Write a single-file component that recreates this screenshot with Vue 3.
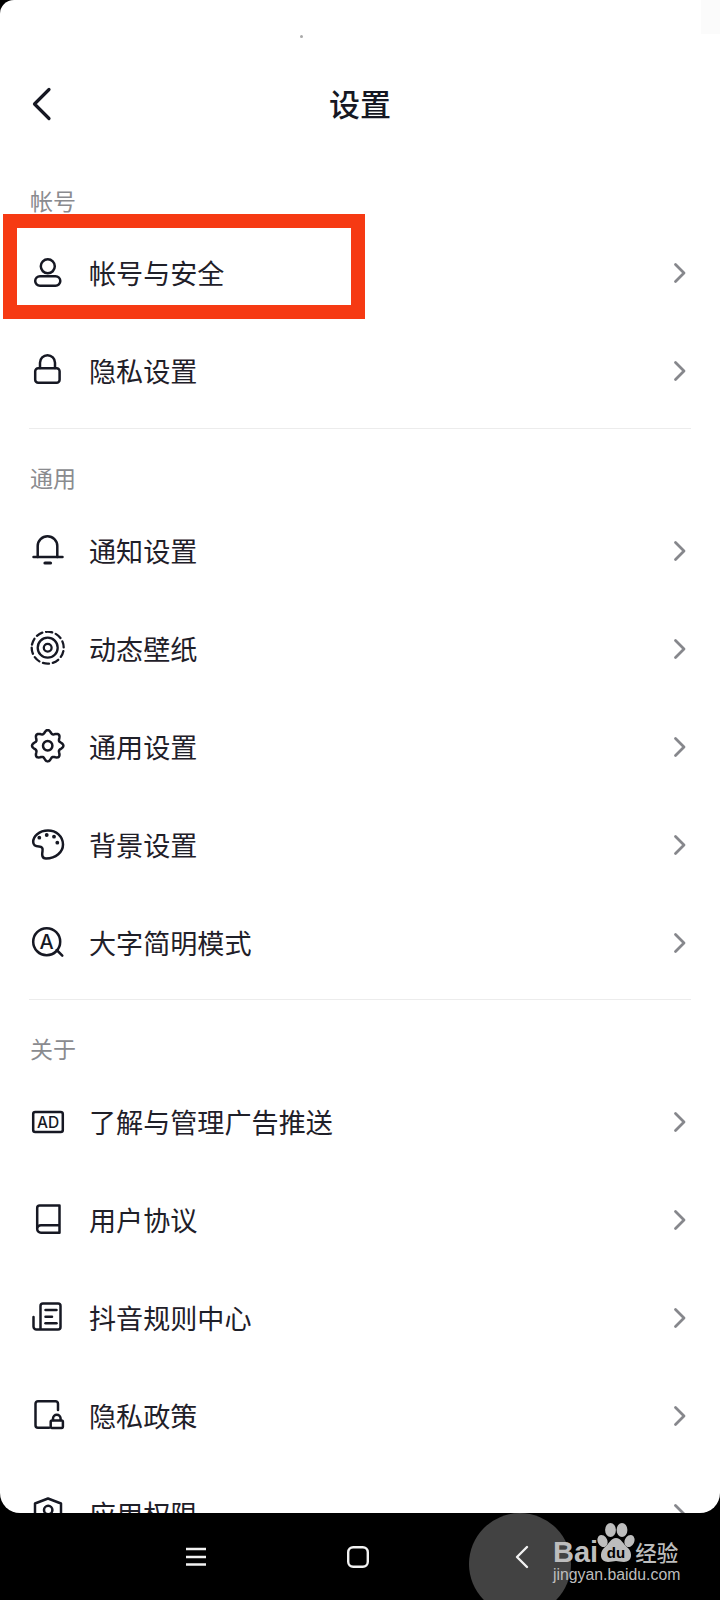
<script setup>
const gear = (() => {
  const pts = []
  for (let i = 0; i < 96; i++) {
    const t = (i / 96) * Math.PI * 2
    const r = 14 + 1.7 * Math.cos(8 * t)
    const x = 19.7 + r * Math.sin(t)
    const y = 16.7 - r * Math.cos(t)
    pts.push(`${i ? 'L' : 'M'}${x.toFixed(2)} ${y.toFixed(2)}`)
  }
  return pts.join(' ') + ' Z'
})()

const icons = {
  user: [{ d: 'M12.8 11.3a7 7 0 1 0 14 0a7 7 0 1 0 -14 0Z' }, { d: 'M12 21.2H27.5a4.8 4.8 0 0 1 0 9.6H12a4.8 4.8 0 0 1 0-9.6Z' }],
  lock: [{ d: 'M12 15V9.7a7.5 7.5 0 0 1 15 0V15' }, { d: 'M10.2 15.2H28.6a3 3 0 0 1 3 3V26.8a3 3 0 0 1-3 3H10.2a3 3 0 0 1-3-3V18.2a3 3 0 0 1 3-3Z' }],
  bell: [{ d: 'M5.5 24H34.5' }, { d: 'M9.7 24V13a9.8 9.8 0 0 1 19.6 0V24' }, { d: 'M17 30H22.5', thick: true }],
  wall: [
    { d: 'M3.7 16.7a16 16 0 1 0 32 0a16 16 0 1 0-32 0Z', dash: '6.2 3.85', thin: true },
    { d: 'M9.7 16.7a10 10 0 1 0 20 0a10 10 0 1 0-20 0Z', thin: true },
    { d: 'M15.8 16.7a3.9 3.9 0 1 0 7.8 0a3.9 3.9 0 1 0-7.8 0Z', thin: true }
  ],
  gear: [{ d: gear }, { d: 'M15 16.7a4.7 4.7 0 1 0 9.4 0a4.7 4.7 0 1 0-9.4 0Z' }],
  palette: [
    { d: 'M20 3.5C11 3.5 5 9.5 5.2 15C5.3 18.5 8 19.5 11 19.5C14 19.5 15 21 14.5 24C14 27 13.5 31.5 18 31.5C28 31.5 35 25 35 17.5C35 9 28 3.5 20 3.5Z' },
    { d: 'M11.3 10.7h.01', dot: true }, { d: 'M18.7 8h.01', dot: true }, { d: 'M26 9.7h.01', dot: true }, { d: 'M29.3 15.7h.01', dot: true }
  ],
  font: [
    { d: 'M5.2 16.7a13.5 13.5 0 1 0 27 0a13.5 13.5 0 1 0-27 0Z' },
    { d: 'M28.7 25L34.3 30.7' },
    { text: 'A', x: 18.7, y: 24, size: 20 }
  ],
  ad: [
    { d: 'M7.2 7.9H32.8a2 2 0 0 1 2 2V26.1a2 2 0 0 1-2 2H7.2a2 2 0 0 1-2-2V9.9a2 2 0 0 1 2-2Z' },
    { text: 'AD', x: 20, y: 23.5, size: 15.5 }
  ],
  book: [{ d: 'M9.2 27V6a2.5 2.5 0 0 1 2.5-2.5H31.5V30.8H13a3.8 3.8 0 0 1 0-7.6H31.5' }],
  doc: [
    { d: 'M5.5 17V26.5a3 3 0 0 0 3 3H30a2.5 2.5 0 0 0 2.5-2.5V6A2.5 2.5 0 0 0 30 3.5H15A2.5 2.5 0 0 0 12.5 6V29.5' },
    { d: 'M17.5 10H28.5' }, { d: 'M17.5 16.7H24' }, { d: 'M17.5 23.3H28.5' }
  ],
  privacy: [
    { d: 'M21 29.8H10a2.5 2.5 0 0 1-2.5-2.5V5.7A2.5 2.5 0 0 1 10 3.2H27.5A2.5 2.5 0 0 1 30 5.7V12' },
    { d: 'M24 22.4H33.6a1.3 1.3 0 0 1 1.3 1.3V28.6a1.3 1.3 0 0 1-1.3 1.3H24a1.3 1.3 0 0 1-1.3-1.3V23.7a1.3 1.3 0 0 1 1.3-1.3Z' },
    { d: 'M25 22V20.5a3.8 3.8 0 0 1 7.6 0V22' }
  ],
  shield: [
    { d: 'M7 7.5L20 2.5L33 7.5V24C33 30 27 34 20 36C13 34 7 30 7 24Z' },
    { d: 'M16 14a4.2 4.2 0 1 0 8.4 0a4.2 4.2 0 1 0-8.4 0Z' },
    { d: 'M11.5 28C13 22.5 27 22.5 28.5 28' }
  ]
}

const sections = [
  { title: '帐号', items: [['user', '帐号与安全'], ['lock', '隐私设置']] },
  { title: '通用', items: [['bell', '通知设置'], ['wall', '动态壁纸'], ['gear', '通用设置'], ['palette', '背景设置'], ['font', '大字简明模式']] },
  { title: '关于', items: [['ad', '了解与管理广告推送'], ['book', '用户协议'], ['doc', '抖音规则中心'], ['privacy', '隐私政策'], ['shield', '应用权限']] }
]
</script>

<template>
  <div class="phone">
    <main class="screen">
      <span class="speck"></span>
      <header class="head">
        <svg class="back" width="24" height="36" viewBox="0 0 24 36" fill="none">
          <path d="M20 3.5L5.5 18L20 32.5" />
        </svg>
        <h1>设置</h1>
      </header>

      <section v-for="(s, i) in sections" :key="s.title" class="section">
        <div v-if="i" class="divider"></div>
        <div class="label" :class="{ first: !i }">{{ s.title }}</div>
        <div v-for="it in s.items" :key="it[1]" class="row">
          <svg class="icon" width="40" height="36" viewBox="0 0 40 36" fill="none">
            <template v-for="(p, k) in icons[it[0]]" :key="k">
              <text v-if="p.text" :x="p.x" :y="p.y" :font-size="p.size" class="glyph">{{ p.text }}</text>
              <path v-else :d="p.d" :stroke-dasharray="p.dash" :class="{ dot: p.dot, thick: p.thick, thin: p.thin }" />
            </template>
          </svg>
          <span class="name">{{ it[1] }}</span>
          <svg class="chev" width="14" height="22" viewBox="0 0 14 22" fill="none">
            <path d="M2.5 2.5L11 11L2.5 19.5" />
          </svg>
        </div>
      </section>

      <div class="mark"></div>
    </main>

    <nav class="nav">
      <svg width="20" height="20" viewBox="0 0 20 20" fill="none" class="nav-i"><path d="M0 2H20M0 10H20M0 17.5H20" /></svg>
      <svg width="22" height="22" viewBox="0 0 22 22" fill="none" class="nav-i"><rect x="1.2" y="1.2" width="19.6" height="19.6" rx="5" /></svg>
      <svg width="14" height="24" viewBox="0 0 14 24" fill="none" class="nav-i last"><path d="M12 2L2 12L12 22" /></svg>
      <span class="blob"></span>
      <div class="baidu">
        <div class="logo">
          <span class="bai">Bai</span>
          <svg class="paw" width="40" height="44" viewBox="0 0 40 44">
            <ellipse cx="6.5" cy="20" rx="4.8" ry="6.3" transform="rotate(-25 6.5 20)" />
            <ellipse cx="14.5" cy="9" rx="5.4" ry="7" />
            <ellipse cx="26" cy="9" rx="5.4" ry="7" />
            <ellipse cx="33.5" cy="20" rx="4.8" ry="6.3" transform="rotate(25 33.5 20)" />
            <path d="M20 17C25 17 27 23 32 27C37 32 36 41 28 41C24 41 22.5 40 20 40C17.5 40 16 41 12 41C4 41 3 32 8 27C13 23 15 17 20 17Z" />
            <text x="20" y="37" class="du">du</text>
          </svg>
          <span class="jy">经验</span>
        </div>
        <div class="url">jingyan.baidu.com</div>
      </div>
    </nav>

    <div class="highlight"></div>
  </div>
</template>

<style>
html, body { margin: 0; background: #000; }
</style>

<style scoped>
.phone {
  position: relative;
  width: 720px;
  height: 1600px;
  background: #000;
  overflow: hidden;
  display: flex;
  flex-direction: column;
  font-family: "Noto Sans CJK SC", "Noto Sans", sans-serif;
}
.screen {
  position: relative;
  height: 1513px;
  flex: none;
  background: #fff;
  overflow: hidden;
  border-radius: 14px 0 20px 20px;
}
.speck {
  position: absolute;
  left: 300px;
  top: 35px;
  width: 3px;
  height: 3px;
  border-radius: 50%;
  background: #a9a9a9;
}
.mark {
  position: absolute;
  right: 0;
  top: 0;
  width: 19px;
  height: 34px;
  background: #fbfbfb;
}
.head {
  position: relative;
  height: 72px;
  margin-top: 68px;
  display: flex;
  align-items: center;
  justify-content: center;
}
.head h1 {
  margin: 0 0 3px;
  font-size: 31px;
  font-weight: 500;
  color: #161823;
  line-height: 69px;
}
.back {
  position: absolute;
  left: 29px;
  top: 18px;
}
.back path {
  stroke: #161823;
  stroke-width: 3.2;
  stroke-linecap: round;
  stroke-linejoin: round;
}
.divider {
  height: 1px;
  background: #ececec;
  margin: 8px 29px 0;
}
.section:last-of-type .divider {
  margin-top: 7px;
}
.label {
  height: 34px;
  padding: 31px 0 8px 30px;
  font-size: 23px;
  line-height: 34px;
  color: #8a8b8f;
}
.label.first {
  padding-top: 43px;
  padding-bottom: 7px;
}
.row {
  height: 98px;
  display: flex;
  align-items: center;
  padding: 0 33px 0 28px;
}
.icon {
  flex: none;
  margin-right: 21px;
}
.icon path {
  stroke: #161823;
  stroke-width: 2.5;
  stroke-linecap: round;
  stroke-linejoin: round;
}
.icon path.dot {
  stroke-width: 3.8;
}
.icon path.thick {
  stroke-width: 3.2;
}
.icon path.thin {
  stroke-width: 2.3;
}
.glyph {
  fill: #161823;
  text-anchor: middle;
  font-family: "Inter", "Liberation Sans", sans-serif;
  font-weight: 500;
}
.name {
  flex: 1;
  font-size: 27.1px;
  line-height: 40px;
  padding-bottom: 1px;
  color: #1f2029;
}
.chev path {
  stroke: #86878c;
  stroke-width: 2.8;
  stroke-linecap: round;
  stroke-linejoin: round;
}
.nav {
  position: relative;
  flex: 1;
  display: flex;
  align-items: center;
  justify-content: center;
  gap: 141px;
  padding: 0 5px 0 0;
}
.nav-i {
  position: relative;
  z-index: 1;
}
.nav-i.last {
  margin-left: 5px;
}
.nav-i path, .nav-i rect {
  stroke: #f2f2f2;
  stroke-width: 2.4;
  stroke-linecap: round;
  stroke-linejoin: round;
}
.blob {
  position: absolute;
  left: 469px;
  top: 0;
  width: 102px;
  height: 102px;
  border-radius: 50%;
  background: #424242;
}
.baidu {
  position: absolute;
  left: 553px;
  top: 8px;
  color: #bdbdbd;
}
.logo {
  display: flex;
  align-items: flex-end;
  height: 44px;
}
.bai {
  font-family: "Liberation Sans", sans-serif;
  font-weight: 700;
  font-size: 29px;
  line-height: 26px;
}
.paw {
  flex: none;
  margin-left: -2px;
}
.paw ellipse, .paw path {
  fill: #bdbdbd;
}
.du {
  fill: #000;
  font-family: "Liberation Sans", sans-serif;
  font-weight: 700;
  font-size: 15px;
  text-anchor: middle;
}
.jy {
  font-size: 21.5px;
  line-height: 26px;
  margin-left: -1px;
  font-weight: 500;
}
.url {
  font-family: "Liberation Sans", sans-serif;
  font-size: 15.8px;
  line-height: 20px;
  white-space: nowrap;
}
.highlight {
  position: absolute;
  left: 3px;
  top: 214px;
  width: 334px;
  height: 77px;
  border: 14px solid #f63a13;
}
</style>
